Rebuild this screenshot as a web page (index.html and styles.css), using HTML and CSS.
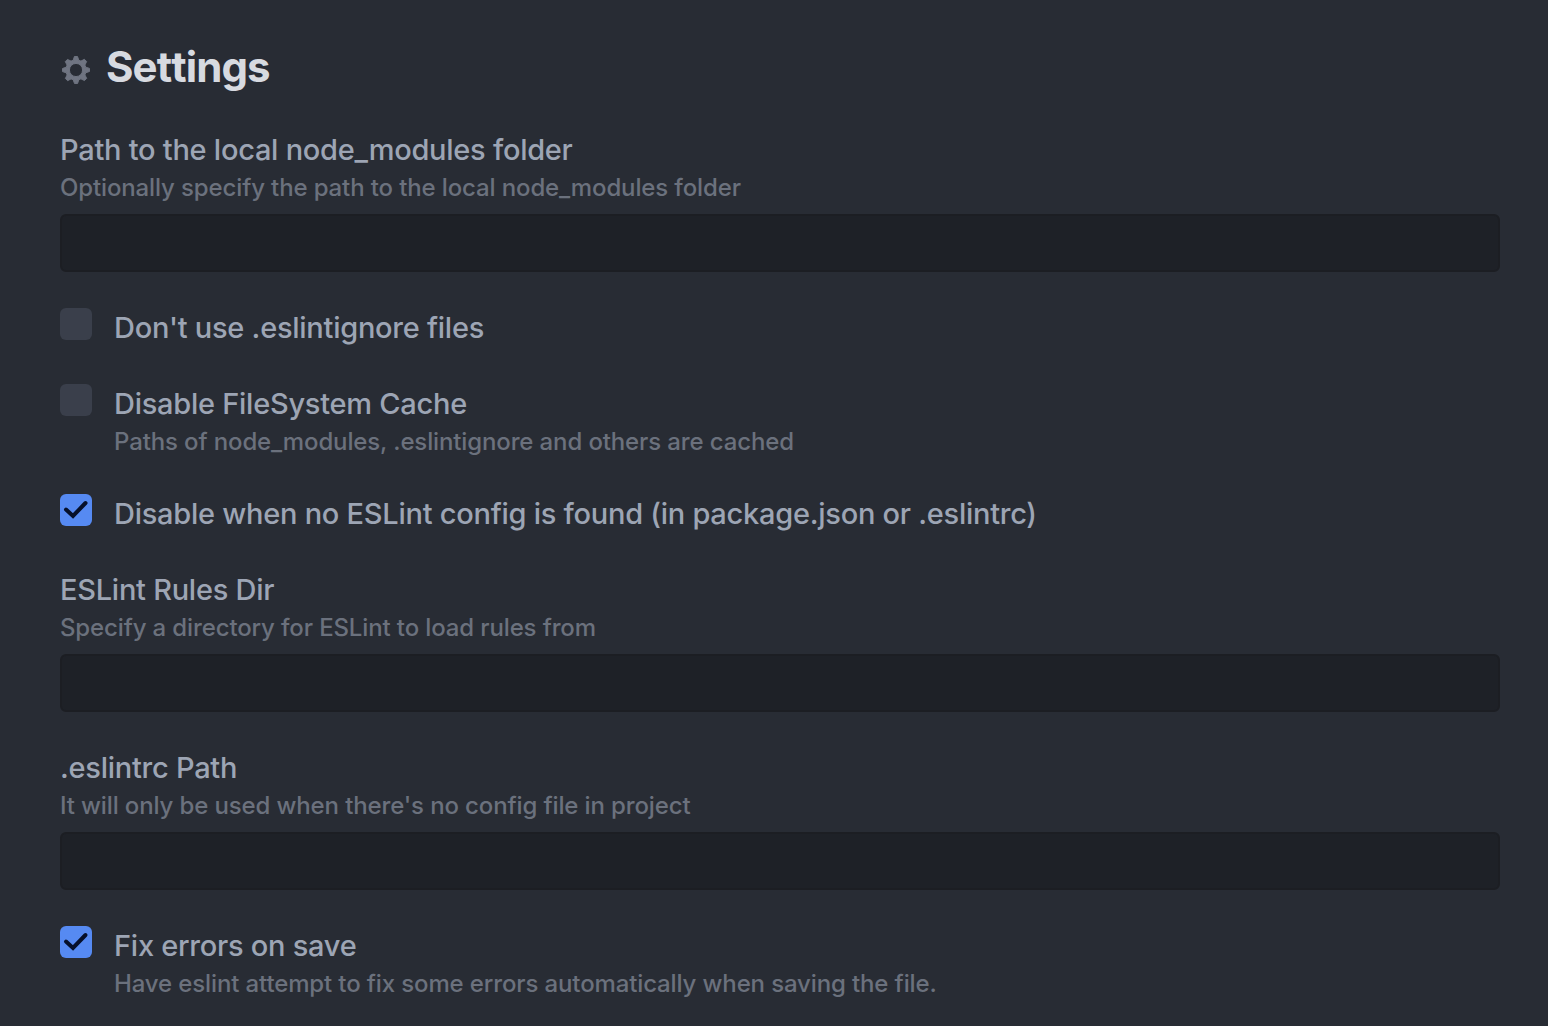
FILE: index.html
```html
<!DOCTYPE html>
<html lang="en">
<head>
<meta charset="utf-8">
<title>Settings</title>
<link rel="stylesheet" href="styles.css">
</head>
<body>
<main class="panel">
  <h1 class="heading">
    <svg class="gear" viewBox="-0.25 -0.25 14.5 16.5" width="28" height="32" aria-hidden="true"><path fill-rule="evenodd" d="M14 8.77v-1.6l-1.94-.64-.45-1.09.88-1.84-1.13-1.13-1.81.91-1.09-.45-.69-1.92h-1.6l-.63 1.94-1.11.45-1.84-.88-1.13 1.13.91 1.81-.45 1.09L0 7.23v1.59l1.94.64.45 1.09-.88 1.84 1.13 1.13 1.81-.91 1.09.45.69 1.92h1.59l.63-1.94 1.11-.45 1.84.88 1.13-1.13-.92-1.81.47-1.09L14 8.75v.02zM7 11.400a3.400 3.400 0 1 1 0-6.800a3.400 3.400 0 0 1 0 6.800z"/></svg>
    <span class="heading-text">Settings</span>
  </h1>
  <section class="setting">
    <label class="title" for="modules">Path to the local node_modules folder</label>
    <p class="description">Optionally specify the path to the local node_modules folder</p>
    <input class="field" id="modules" type="text">
  </section>
  <section class="setting option">
    <span class="box"></span>
    <div class="body"><div class="title">Don't use .eslintignore files</div></div>
  </section>
  <section class="setting option">
    <span class="box"></span>
    <div class="body"><div class="title">Disable FileSystem Cache</div>
    <p class="description">Paths of node_modules, .eslintignore and others are cached</p></div>
  </section>
  <section class="setting option">
    <span class="box checked"><svg viewBox="0 0 32 32" width="32" height="32"><path d="M6 15.500l7 6.500L25.500 9"/></svg></span>
    <div class="body"><div class="title">Disable when no ESLint config is found (in package.json or .eslintrc)</div></div>
  </section>
  <section class="setting">
    <label class="title" for="rules">ESLint Rules Dir</label>
    <p class="description">Specify a directory for ESLint to load rules from</p>
    <input class="field" id="rules" type="text">
  </section>
  <section class="setting">
    <label class="title" for="config">.eslintrc Path</label>
    <p class="description">It will only be used when there's no config file in project</p>
    <input class="field" id="config" type="text">
  </section>
  <section class="setting option">
    <span class="box checked"><svg viewBox="0 0 32 32" width="32" height="32"><path d="M6 15.500l7 6.500L25.500 9"/></svg></span>
    <div class="body"><div class="title">Fix errors on save</div>
    <p class="description">Have eslint attempt to fix some errors automatically when saving the file.</p></div>
  </section>
</main>
</body>
</html>
```

FILE: styles.css
```css
* { box-sizing: border-box; }
body { margin: 0; background: #282c34; font-family: Inter, sans-serif; }
.panel { height: 1026px; padding: 43px 48px 0 60px; overflow: hidden; }
.heading { display: flex; align-items: center; gap: 16px; height: 48px; margin: 0 0 39px; padding-left: 2px; font-size: 42px; line-height: 48px; font-weight: 750; font-kerning: none; letter-spacing: -0.9px; color: #d7dae0; }
.gear { fill: #6f7481; stroke: #6f7481; stroke-width: 0.5; stroke-linejoin: round; margin-top: 6px; }
.setting { margin-bottom: 36px; }
.title { display: block; height: 40px; line-height: 40px; font-size: 29px; font-weight: 450; letter-spacing: -0.26px; color: #9da5b4; white-space: nowrap; }
.description { margin: 2px 0 0; height: 32px; line-height: 32px; font-size: 24px; font-weight: 500; letter-spacing: -0.13px; color: #6b717d; white-space: nowrap; }
.field { display: block; width: 100%; height: 58px; margin-top: 10px; border: 2px solid #1c1e23; border-radius: 6px; background: #1e2127; }
.option { display: flex; gap: 22px; }
.box { width: 32px; height: 32px; flex: none; border-radius: 6px; background: #3a3f4b; }
.checked { background: #568af2; }
.box svg { display: block; fill: none; stroke: #06102b; stroke-width: 4; stroke-linecap: round; }
```
